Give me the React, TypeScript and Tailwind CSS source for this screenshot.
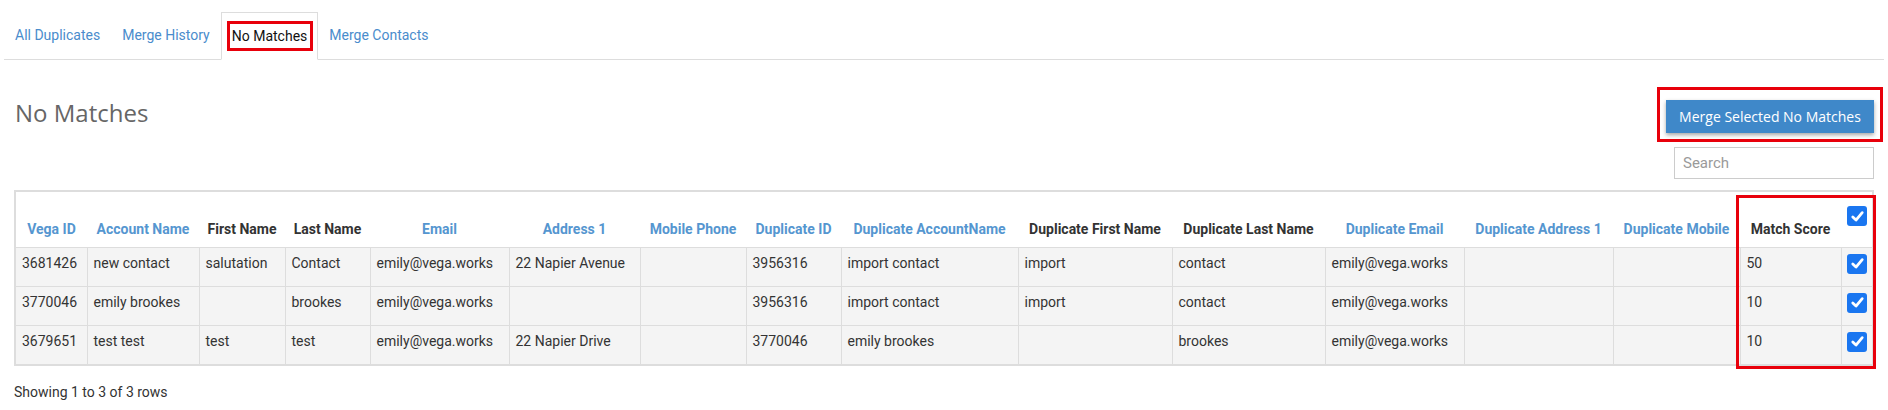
import React from "react";

const blue = "text-[#5596d0]";
const dark = "text-[#333333]";

type Col = { label: string; w: number; blue: boolean };

const cols: Col[] = [
  { label: "Vega ID", w: 71, blue: true },
  { label: "Account Name", w: 112, blue: true },
  { label: "First Name", w: 86, blue: false },
  { label: "Last Name", w: 85, blue: false },
  { label: "Email", w: 139, blue: true },
  { label: "Address 1", w: 131, blue: true },
  { label: "Mobile Phone", w: 106, blue: true },
  { label: "Duplicate ID", w: 95, blue: true },
  { label: "Duplicate AccountName", w: 177, blue: true },
  { label: "Duplicate First Name", w: 154, blue: false },
  { label: "Duplicate Last Name", w: 153, blue: false },
  { label: "Duplicate Email", w: 139, blue: true },
  { label: "Duplicate Address 1", w: 149, blue: true },
  { label: "Duplicate Mobile", w: 127, blue: true },
  { label: "Match Score", w: 101, blue: false },
];

const rows: string[][] = [
  ["3681426", "new contact", "salutation", "Contact", "emily@vega.works", "22 Napier Avenue", "", "3956316", "import contact", "import", "contact", "emily@vega.works", "", "", "50"],
  ["3770046", "emily brookes", "", "brookes", "emily@vega.works", "", "", "3956316", "import contact", "import", "contact", "emily@vega.works", "", "", "10"],
  ["3679651", "test test", "test", "test", "emily@vega.works", "22 Napier Drive", "", "3770046", "emily brookes", "", "brookes", "emily@vega.works", "", "", "10"],
];

function Check() {
  return (
    <div className="w-5 h-5 rounded-[3px] bg-[#1a76f0] flex items-center justify-center">
      <svg width="15" height="15" viewBox="0 0 14 14" fill="none">
        <path d="M2.6 7.4 L5.6 10.3 L11.4 3.4" stroke="white" strokeWidth="2.6" strokeLinecap="round" strokeLinejoin="round" />
      </svg>
    </div>
  );
}

export default function App() {
  const tabs = ["All Duplicates", "Merge History", "No Matches", "Merge Contacts"];
  return (
    <div className="w-[1888px] h-[410px] bg-white relative" style={{ fontFamily: "Roboto, 'Liberation Sans', sans-serif" }}>
      {/* Tabs */}
      <div className="pt-[12px] px-[4px]">
        <div className="flex border-b border-[#dddddd] h-[48px]">
          {tabs.map((t) => {
            const active = t === "No Matches";
            return (
              <div
                key={t}
                className={
                  active
                    ? "relative h-[48px] -mb-px px-[10px] flex items-center border border-[#dddddd] border-b-white bg-white text-[14px] text-[#111111]"
                    : "h-[47px] px-[11px] flex items-center text-[14px] text-[#4a8ccc]"
                }
              >
                {t}
                {active && (
                  <div className="absolute left-[5px] top-[8px] w-[86px] h-[30px] border-[3px] border-[#e8000b]" />
                )}
              </div>
            );
          })}
        </div>
      </div>

      {/* Content */}
      <div className="px-[14px]">
        <div className="flex justify-between items-start">
          <h1
            className="mt-[36px] ml-px text-[24px] leading-[33px] text-[#666666] font-normal"
            style={{ fontFamily: "'Open Sans', sans-serif" }}
          >
            No Matches
          </h1>
          <div className="flex flex-col items-end pt-[40px]">
            <div className="relative">
              <button
                className="w-[208px] h-[33px] bg-[#3f88c9] text-white text-[14px] shadow-[0_2px_4px_rgba(0,0,0,0.35)]"
                style={{ fontFamily: "'Open Sans', sans-serif" }}
              >
                Merge Selected No Matches
              </button>
              <div className="absolute -left-[9px] -top-[13px] w-[226px] h-[55px] border-[3px] border-[#e8000b]" />
            </div>
            <input
              className="mt-[14px] w-[200px] h-[32px] border border-[#cccccc] px-[8px] text-[15px] text-[#333] placeholder:text-[#9a9a9a] outline-none"
              placeholder="Search"
            />
          </div>
        </div>

        {/* Table */}
        <div className="relative mt-[11px] border-2 border-[#dddddd] w-[1860px]">
          <table className="w-[1856px] table-fixed border-collapse text-[14px] text-[#333333]">
            <colgroup>
              {cols.map((c) => (
                <col key={c.label} style={{ width: c.w }} />
              ))}
              <col style={{ width: 31 }} />
            </colgroup>
            <thead>
              <tr className="h-[55px] bg-white">
                {cols.map((c) => (
                  <th
                    key={c.label}
                    className={`align-bottom pb-[8px] px-[4px] text-center font-bold whitespace-nowrap leading-[20px] ${c.blue ? blue : dark}`}
                  >
                    {c.label}
                  </th>
                ))}
                <th className="align-top pt-[14px] px-0">
                  <div className="flex justify-center pl-px">
                    <Check />
                  </div>
                </th>
              </tr>
            </thead>
            <tbody>
              {rows.map((r, i) => (
                <tr key={i} className="h-[39px] bg-[#f4f4f4]">
                  {r.map((v, j) => (
                    <td
                      key={j}
                      className={`align-top pt-[5px] pl-[6px] pr-[2px] leading-[20px] whitespace-nowrap border-t border-[#dddddd] ${j === 0 ? "" : "border-l"}`}
                    >
                      {v}
                    </td>
                  ))}
                  <td className="align-top pt-[6px] border-t border-l border-[#dddddd]">
                    <div className="flex justify-center pl-px">
                      <Check />
                    </div>
                  </td>
                </tr>
              ))}
            </tbody>
          </table>
          <div className="absolute left-[1720px] top-[3px] w-[140px] h-[174px] border-[3px] border-[#e8000b] pointer-events-none" />
        </div>

        <div className="mt-[16px] text-[14px] text-[#333333] leading-[20px]">Showing 1 to 3 of 3 rows</div>
      </div>
    </div>
  );
}
